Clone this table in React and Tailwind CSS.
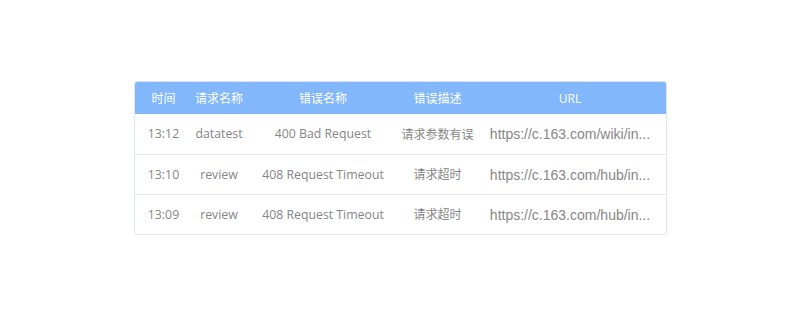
import React from "react";

const cols = "grid grid-cols-[58px_53px_155px_74px_191px]";
const rows = [
  ["13:12", "datatest", "400 Bad Request", "请求参数有误", "https://c.163.com/wiki/in..."],
  ["13:10", "review", "408 Request Timeout", "请求超时", "https://c.163.com/hub/in..."],
  ["13:09", "review", "408 Request Timeout", "请求超时", "https://c.163.com/hub/in..."],
];
const heads = ["时间", "请求名称", "错误名称", "错误描述", "URL"];

export default function App() {
  return (
    <div
      className="h-[316px] w-full flex items-center justify-center bg-white"
      style={{ fontFamily: '"Open Sans", "Noto Sans CJK SC", sans-serif' }}
    >
      <div className="w-[533px] border border-[#dfe5ec] rounded-[3px] overflow-hidden">
        <div className={`${cols} h-[32px] pt-[1px] bg-[#83b7fc] text-white text-[12px]`}>
          {heads.map((h) => (
            <div key={h} className="flex items-center justify-center whitespace-nowrap">
              {h}
            </div>
          ))}
        </div>
        {rows.map((r, i) => (
          <div
            key={i}
            className={`${cols} h-[40px] pt-[1px] text-[12.3px] text-[#868686] ${i > 0 ? "border-t border-[#e3e8ee]" : ""}`}
          >
            <div className="flex items-center justify-center whitespace-nowrap">{r[0]}</div>
            <div className="flex items-center justify-center whitespace-nowrap">{r[1]}</div>
            <div className="flex items-center justify-center whitespace-nowrap">{r[2]}</div>
            <div className="flex items-center justify-center whitespace-nowrap text-[12px]">{r[3]}</div>
            <div
              className="flex items-center justify-center whitespace-nowrap text-[14px] text-[#878787]"
              style={{ fontFamily: '"Liberation Sans", Arial, sans-serif' }}
            >
              {r[4]}
            </div>
          </div>
        ))}
      </div>
    </div>
  );
}
